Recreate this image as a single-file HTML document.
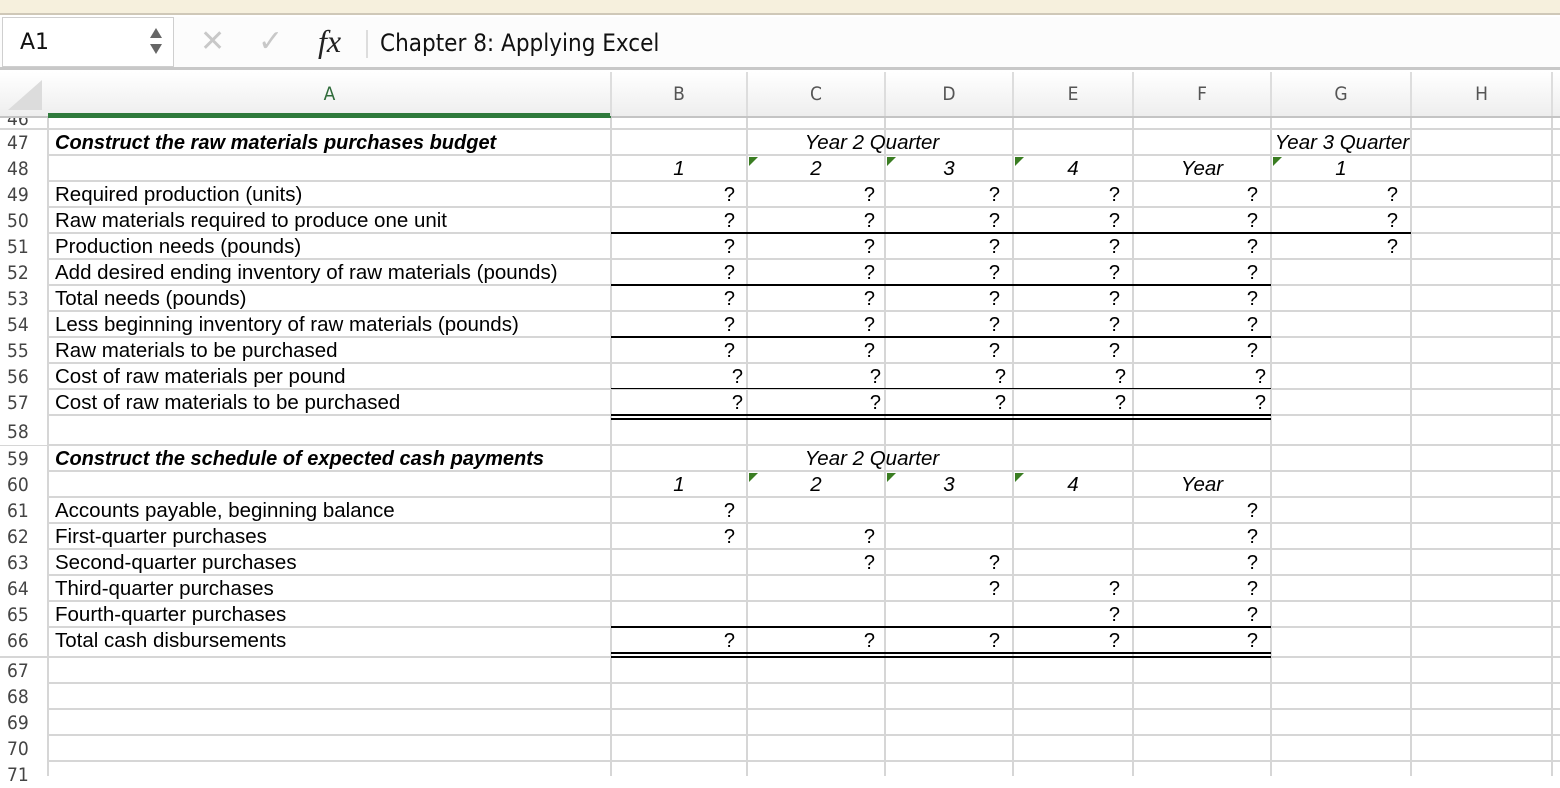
<!DOCTYPE html>
<html><head><meta charset="utf-8"><style>
*{margin:0;padding:0;box-sizing:border-box}
body{width:1560px;height:776px;overflow:hidden;background:#fff;position:relative;font-family:"Liberation Sans",Arial,sans-serif;color:#000}
.a{position:absolute}
.vl{position:absolute;top:118px;bottom:0;width:2px;background:#d6d6d6}
.hl{position:absolute;left:0;right:0;height:2px;background:#d6d6d6}
.rn{position:absolute;left:0;width:47px;height:26px;line-height:26px;text-align:left;padding-left:7px;font-size:19px;color:#444;background:#fff;font-family:"DejaVu Sans Condensed","DejaVu Sans",sans-serif}
.t{position:absolute;height:26px;line-height:26px;font-size:20.5px;white-space:nowrap}
.q{position:absolute;height:26px;line-height:26px;font-size:20px;text-align:right}
.c{position:absolute;height:26px;line-height:26px;font-size:20.5px;font-style:italic;text-align:center}
.bk{position:absolute;height:2px;background:#000}
.tri{position:absolute;width:0;height:0;border-top:9px solid #3a7d22;border-right:9px solid transparent}
.ch{position:absolute;top:72px;height:44px;line-height:44px;text-align:center;font-size:19px;color:#555;font-family:"DejaVu Sans Condensed","DejaVu Sans",sans-serif}
</style></head><body>
<div class="a" style="left:0;top:0;width:1560px;height:15px;background:#f6f0dd;border-bottom:2px solid #cfc8b8"></div>
<div class="a" style="left:0;top:17px;width:1560px;height:53px;background:#fcfcfc;border-bottom:3px solid #c8c8c8"></div>
<div class="a" style="left:2px;top:17px;width:172px;height:50px;background:#fff;border:1px solid #cfcfcf"></div>
<div class="a" style="left:20px;top:27px;font-size:22px;line-height:32px;font-family:'DejaVu Sans',sans-serif;color:#111">A1</div>
<div class="a" style="left:150px;top:28px;width:0;height:0;border-left:6px solid transparent;border-right:6px solid transparent;border-bottom:10px solid #666"></div>
<div class="a" style="left:150px;top:44px;width:0;height:0;border-left:6px solid transparent;border-right:6px solid transparent;border-top:10px solid #666"></div>
<div class="a" style="left:200px;top:24px;font-size:30px;color:#c8c8c8;font-family:'DejaVu Sans',sans-serif">✕</div>
<div class="a" style="left:258px;top:24px;font-size:30px;color:#c8c8c8;font-family:'DejaVu Sans',sans-serif">✓</div>
<div class="a" style="left:318px;top:23px;font-size:32px;font-style:italic;font-family:'Liberation Serif',serif;color:#222">fx</div>
<div class="a" style="left:366px;top:30px;width:2px;height:28px;background:#ddd"></div>
<div class="a" style="left:380px;top:27px;font-size:24px;line-height:32px;font-family:'DejaVu Sans Condensed','DejaVu Sans',sans-serif;color:#111">Chapter 8: Applying Excel</div>
<div class="a" style="left:0;top:72px;width:1560px;height:46px;background:linear-gradient(#fff,#eeeeee);border-bottom:2px solid #c4c4c4"></div>
<div class="a" style="left:8px;top:80px;width:0;height:0;border-bottom:30px solid #dcdcdc;border-left:34px solid transparent"></div>
<div class="a" style="left:48px;top:113px;width:563px;height:5px;background:#2f7a3c"></div>
<div class="ch" style="left:48px;width:563px;color:#2f6b3a">A</div>
<div class="ch" style="left:611px;width:136px">B</div>
<div class="ch" style="left:747px;width:138px">C</div>
<div class="ch" style="left:885px;width:128px">D</div>
<div class="ch" style="left:1013px;width:120px">E</div>
<div class="ch" style="left:1133px;width:138px">F</div>
<div class="ch" style="left:1271px;width:140px">G</div>
<div class="ch" style="left:1411px;width:141px">H</div>
<div class="a" style="left:610px;top:72px;width:2px;height:44px;background:#ddd"></div>
<div class="a" style="left:746px;top:72px;width:2px;height:44px;background:#ddd"></div>
<div class="a" style="left:884px;top:72px;width:2px;height:44px;background:#ddd"></div>
<div class="a" style="left:1012px;top:72px;width:2px;height:44px;background:#ddd"></div>
<div class="a" style="left:1132px;top:72px;width:2px;height:44px;background:#ddd"></div>
<div class="a" style="left:1270px;top:72px;width:2px;height:44px;background:#ddd"></div>
<div class="a" style="left:1410px;top:72px;width:2px;height:44px;background:#ddd"></div>
<div class="a" style="left:1551px;top:72px;width:2px;height:44px;background:#ddd"></div>
<div class="vl" style="left:47px"></div>
<div class="vl" style="left:610px"></div>
<div class="vl" style="left:746px"></div>
<div class="vl" style="left:884px"></div>
<div class="vl" style="left:1012px"></div>
<div class="vl" style="left:1132px"></div>
<div class="vl" style="left:1270px"></div>
<div class="vl" style="left:1410px"></div>
<div class="vl" style="left:1551px"></div>
<div class="hl" style="top:128px"></div><div class="hl" style="top:154px"></div><div class="hl" style="top:180px"></div><div class="hl" style="top:206px"></div><div class="hl" style="top:232px"></div><div class="hl" style="top:258px"></div><div class="hl" style="top:284px"></div><div class="hl" style="top:310px"></div><div class="hl" style="top:336px"></div><div class="hl" style="top:362px"></div><div class="hl" style="top:388px"></div><div class="hl" style="top:414px"></div><div class="hl" style="top:444px"></div><div class="hl" style="top:470px"></div><div class="hl" style="top:496px"></div><div class="hl" style="top:522px"></div><div class="hl" style="top:548px"></div><div class="hl" style="top:574px"></div><div class="hl" style="top:600px"></div><div class="hl" style="top:626px"></div><div class="hl" style="top:656px"></div><div class="hl" style="top:682px"></div><div class="hl" style="top:708px"></div><div class="hl" style="top:734px"></div><div class="hl" style="top:760px"></div>
<div class="rn" style="top:118px;height:10px;line-height:2px;overflow:hidden">46</div>
<div class="rn" style="top:130px">47</div><div class="rn" style="top:156px">48</div><div class="rn" style="top:182px">49</div><div class="rn" style="top:208px">50</div><div class="rn" style="top:234px">51</div><div class="rn" style="top:260px">52</div><div class="rn" style="top:286px">53</div><div class="rn" style="top:312px">54</div><div class="rn" style="top:338px">55</div><div class="rn" style="top:364px">56</div><div class="rn" style="top:390px">57</div><div class="rn" style="top:419px">58</div><div class="rn" style="top:446px">59</div><div class="rn" style="top:472px">60</div><div class="rn" style="top:498px">61</div><div class="rn" style="top:524px">62</div><div class="rn" style="top:550px">63</div><div class="rn" style="top:576px">64</div><div class="rn" style="top:602px">65</div><div class="rn" style="top:628px">66</div><div class="rn" style="top:658px">67</div><div class="rn" style="top:684px">68</div><div class="rn" style="top:710px">69</div><div class="rn" style="top:736px">70</div><div class="rn" style="top:762px">71</div>
<div class="t" style="left:55px;top:130px;font-weight:bold;font-style:italic;font-size:20px">Construct the raw materials purchases budget</div>
<div class="t" style="left:55px;top:182px">Required production (units)</div>
<div class="t" style="left:55px;top:208px">Raw materials required to produce one unit</div>
<div class="t" style="left:55px;top:234px">Production needs (pounds)</div>
<div class="t" style="left:55px;top:260px">Add desired ending inventory of raw materials (pounds)</div>
<div class="t" style="left:55px;top:286px">Total needs (pounds)</div>
<div class="t" style="left:55px;top:312px">Less beginning inventory of raw materials (pounds)</div>
<div class="t" style="left:55px;top:338px">Raw materials to be purchased</div>
<div class="t" style="left:55px;top:364px">Cost of raw materials per pound</div>
<div class="t" style="left:55px;top:390px">Cost of raw materials to be purchased</div>
<div class="t" style="left:55px;top:446px;font-weight:bold;font-style:italic;font-size:20px">Construct the schedule of expected cash payments</div>
<div class="t" style="left:55px;top:498px">Accounts payable, beginning balance</div>
<div class="t" style="left:55px;top:524px">First-quarter purchases</div>
<div class="t" style="left:55px;top:550px">Second-quarter purchases</div>
<div class="t" style="left:55px;top:576px">Third-quarter purchases</div>
<div class="t" style="left:55px;top:602px">Fourth-quarter purchases</div>
<div class="t" style="left:55px;top:628px">Total cash disbursements</div>
<div class="c" style="left:611px;width:522px;top:130px">Year 2 Quarter</div>
<div class="c" style="left:1133px;width:418px;top:130px">Year 3 Quarter</div>
<div class="c" style="left:611px;width:136px;top:156px">1</div>
<div class="c" style="left:747px;width:138px;top:156px">2</div>
<div class="c" style="left:885px;width:128px;top:156px">3</div>
<div class="c" style="left:1013px;width:120px;top:156px">4</div>
<div class="c" style="left:1133px;width:138px;top:156px">Year</div>
<div class="c" style="left:1271px;width:140px;top:156px">1</div>
<div class="tri" style="left:749px;top:157px"></div><div class="tri" style="left:887px;top:157px"></div><div class="tri" style="left:1015px;top:157px"></div><div class="tri" style="left:1273px;top:157px"></div>
<div class="c" style="left:611px;width:522px;top:446px">Year 2 Quarter</div>
<div class="c" style="left:611px;width:136px;top:472px">1</div>
<div class="c" style="left:747px;width:138px;top:472px">2</div>
<div class="c" style="left:885px;width:128px;top:472px">3</div>
<div class="c" style="left:1013px;width:120px;top:472px">4</div>
<div class="c" style="left:1133px;width:138px;top:472px">Year</div>
<div class="tri" style="left:749px;top:473px"></div><div class="tri" style="left:887px;top:473px"></div><div class="tri" style="left:1015px;top:473px"></div>
<div class="a" style="left:0;top:0">
<div class="q" style="left:700px;width:35px;top:182px">?</div><div class="q" style="left:840px;width:35px;top:182px">?</div><div class="q" style="left:965px;width:35px;top:182px">?</div><div class="q" style="left:1085px;width:35px;top:182px">?</div><div class="q" style="left:1223px;width:35px;top:182px">?</div><div class="q" style="left:1363px;width:35px;top:182px">?</div>
<div class="q" style="left:700px;width:35px;top:208px">?</div><div class="q" style="left:840px;width:35px;top:208px">?</div><div class="q" style="left:965px;width:35px;top:208px">?</div><div class="q" style="left:1085px;width:35px;top:208px">?</div><div class="q" style="left:1223px;width:35px;top:208px">?</div><div class="q" style="left:1363px;width:35px;top:208px">?</div>
<div class="q" style="left:700px;width:35px;top:234px">?</div><div class="q" style="left:840px;width:35px;top:234px">?</div><div class="q" style="left:965px;width:35px;top:234px">?</div><div class="q" style="left:1085px;width:35px;top:234px">?</div><div class="q" style="left:1223px;width:35px;top:234px">?</div><div class="q" style="left:1363px;width:35px;top:234px">?</div>
<div class="q" style="left:700px;width:35px;top:260px">?</div><div class="q" style="left:840px;width:35px;top:260px">?</div><div class="q" style="left:965px;width:35px;top:260px">?</div><div class="q" style="left:1085px;width:35px;top:260px">?</div><div class="q" style="left:1223px;width:35px;top:260px">?</div>
<div class="q" style="left:700px;width:35px;top:286px">?</div><div class="q" style="left:840px;width:35px;top:286px">?</div><div class="q" style="left:965px;width:35px;top:286px">?</div><div class="q" style="left:1085px;width:35px;top:286px">?</div><div class="q" style="left:1223px;width:35px;top:286px">?</div>
<div class="q" style="left:700px;width:35px;top:312px">?</div><div class="q" style="left:840px;width:35px;top:312px">?</div><div class="q" style="left:965px;width:35px;top:312px">?</div><div class="q" style="left:1085px;width:35px;top:312px">?</div><div class="q" style="left:1223px;width:35px;top:312px">?</div>
<div class="q" style="left:700px;width:35px;top:338px">?</div><div class="q" style="left:840px;width:35px;top:338px">?</div><div class="q" style="left:965px;width:35px;top:338px">?</div><div class="q" style="left:1085px;width:35px;top:338px">?</div><div class="q" style="left:1223px;width:35px;top:338px">?</div>
<div class="q" style="left:708px;width:35px;top:364px">?</div><div class="q" style="left:846px;width:35px;top:364px">?</div><div class="q" style="left:971px;width:35px;top:364px">?</div><div class="q" style="left:1091px;width:35px;top:364px">?</div><div class="q" style="left:1231px;width:35px;top:364px">?</div>
<div class="q" style="left:708px;width:35px;top:390px">?</div><div class="q" style="left:846px;width:35px;top:390px">?</div><div class="q" style="left:971px;width:35px;top:390px">?</div><div class="q" style="left:1091px;width:35px;top:390px">?</div><div class="q" style="left:1231px;width:35px;top:390px">?</div>
<div class="q" style="left:700px;width:35px;top:498px">?</div><div class="q" style="left:1223px;width:35px;top:498px">?</div>
<div class="q" style="left:700px;width:35px;top:524px">?</div><div class="q" style="left:840px;width:35px;top:524px">?</div><div class="q" style="left:1223px;width:35px;top:524px">?</div>
<div class="q" style="left:840px;width:35px;top:550px">?</div><div class="q" style="left:965px;width:35px;top:550px">?</div><div class="q" style="left:1223px;width:35px;top:550px">?</div>
<div class="q" style="left:965px;width:35px;top:576px">?</div><div class="q" style="left:1085px;width:35px;top:576px">?</div><div class="q" style="left:1223px;width:35px;top:576px">?</div>
<div class="q" style="left:1085px;width:35px;top:602px">?</div><div class="q" style="left:1223px;width:35px;top:602px">?</div>
<div class="q" style="left:700px;width:35px;top:628px">?</div><div class="q" style="left:840px;width:35px;top:628px">?</div><div class="q" style="left:965px;width:35px;top:628px">?</div><div class="q" style="left:1085px;width:35px;top:628px">?</div><div class="q" style="left:1223px;width:35px;top:628px">?</div>
</div>
<div class="bk" style="left:611px;width:800px;top:232px"></div>
<div class="bk" style="left:611px;width:660px;top:284px"></div>
<div class="bk" style="left:611px;width:660px;top:336px"></div>
<div class="bk" style="left:611px;width:660px;top:388px;height:1px"></div>
<div class="bk" style="left:611px;width:660px;top:414px"></div>
<div class="bk" style="left:611px;width:660px;top:418px"></div>
<div class="bk" style="left:611px;width:660px;top:626px"></div>
<div class="bk" style="left:611px;width:660px;top:652px"></div>
<div class="bk" style="left:611px;width:660px;top:656px"></div>
</body></html>
